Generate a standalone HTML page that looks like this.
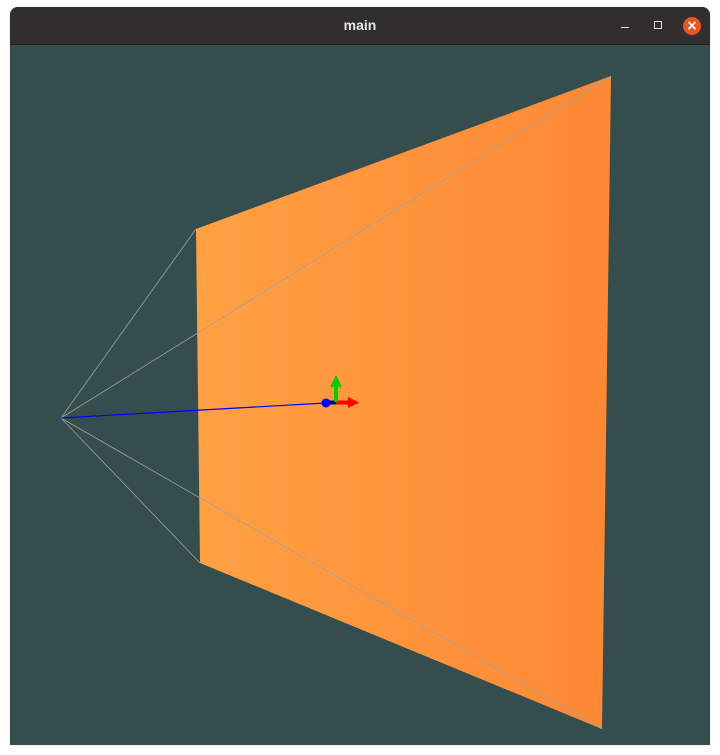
<!DOCTYPE html>
<html><head><style>
html,body{margin:0;padding:0;background:#fff;width:720px;height:755px;overflow:hidden}
.win{position:absolute;left:10px;top:7px;width:700px;height:738px;border-radius:8px 8px 0 0;overflow:hidden;background:#354d4d;box-shadow:0 0 1px #999}
.tb{position:absolute;left:0;top:0;width:700px;height:37px;background:#302e2e;border-bottom:1px solid #1f1f1f}
.tt{position:absolute;left:0;right:0;top:10px;text-align:center;color:#e6e6e6;font:bold 14px "Liberation Sans",sans-serif}
</style></head><body>
<div class="win">
<div class="tb"><div class="tt">main</div>
<div style="position:absolute;left:611px;top:20px;width:8px;height:1px;background:#ddd"></div>
<div style="position:absolute;left:644px;top:14px;width:6px;height:6px;border:1px solid #ddd"></div>
<div style="position:absolute;left:673px;top:10px;width:18px;height:18px;border-radius:50%;background:#e95420;color:#fff;font:bold 14px 'DejaVu Sans',sans-serif;text-align:center;line-height:18px">×</div>
</div>
</div>
<svg width="720" height="755" style="position:absolute;left:0;top:0">
<defs><linearGradient id="g" x1="196" x2="611" y1="0" y2="0" gradientUnits="userSpaceOnUse"><stop offset="0" stop-color="#ffa043"/><stop offset="1" stop-color="#ff8834"/></linearGradient></defs>
<polygon points="196,229 611,76 602,729 200,563" fill="url(#g)"/>
<g stroke="#a0a0a0" stroke-width="0.8" fill="none">
<line x1="61" y1="418" x2="196" y2="229"/><line x1="61" y1="418" x2="611" y2="76"/>
<line x1="61" y1="418" x2="200" y2="563"/><line x1="61" y1="418" x2="602" y2="729"/>
</g>
<line x1="61" y1="418" x2="326" y2="403" stroke="#0000ff" stroke-width="1.2"/>
<line x1="326" y1="402.5" x2="336" y2="402.5" stroke="#000080" stroke-width="4"/>
<line x1="336" y1="402.5" x2="350" y2="402.5" stroke="#f00" stroke-width="4"/>
<polygon points="348,397 359,402.5 348,408" fill="#f00"/>
<line x1="336" y1="402" x2="336" y2="384" stroke="#0c0" stroke-width="4"/>
<polygon points="330,387 336,375 342,387" fill="#0c0"/>
<circle cx="326" cy="403" r="4.5" fill="#0000ff"/>
</svg>
</body></html>
